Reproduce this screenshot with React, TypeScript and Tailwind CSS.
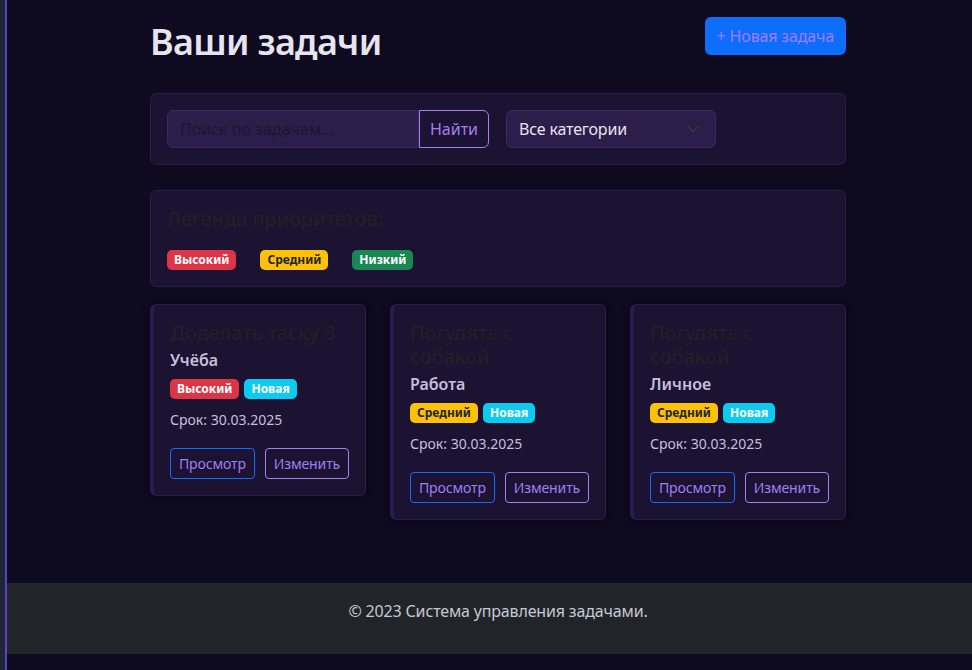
import React from "react";

type Task = {
  id: number;
  title: string;
  category: string;
  priority: "high" | "medium" | "low";
  due: string;
};

const tasks: Task[] = [
  { id: 1, title: "Доделать таску 3", category: "Учёба", priority: "high", due: "30.03.2025" },
  { id: 2, title: "Погулять с собакой", category: "Работа", priority: "medium", due: "30.03.2025" },
  { id: 3, title: "Погулять с собакой", category: "Личное", priority: "medium", due: "30.03.2025" },
];

const PriorityBadge = ({ level }: { level: Task["priority"] }) => {
  if (level === "high")
    return <span className="rounded-[5px] bg-[#dc3545] px-[7px] py-[3px] text-[12px] leading-[14px] font-bold text-white">Высокий</span>;
  if (level === "medium")
    return <span className="rounded-[5px] bg-[#ffc107] px-[7px] py-[3px] text-[12px] leading-[14px] font-bold text-[#212529]">Средний</span>;
  return <span className="rounded-[5px] bg-[#198754] px-[7px] py-[3px] text-[12px] leading-[14px] font-bold text-white">Низкий</span>;
};

const TaskCard = ({ task }: { task: Task }) => (
  <div className="self-start rounded-[6px] border border-l-4 border-[#2a1d47] border-l-[#2c1a50] bg-[#1c1232] p-4 shadow-[0_2px_8px_rgba(0,0,0,0.35)]">
    <h5 className="mb-[3px] text-[20px] leading-[24px] font-medium tracking-[-0.01em] text-[#1f2125]">{task.title}</h5>
    <h6 className="mb-[7px] text-[16px] leading-[24px] font-semibold text-[#c6bfdc]">{task.category}</h6>
    <div className="mb-[10px] flex h-[20px] items-center gap-[5px]">
      <PriorityBadge level={task.priority} />
      <span className="rounded-[5px] bg-[#0dcaf0] px-[7px] py-[3px] text-[12px] leading-[14px] font-bold text-white">Новая</span>
    </div>
    <p className="mb-[18px] text-[14px] leading-[21px] text-[#c6bfdc]">Срок: {task.due}</p>
    <div className="flex justify-between">
      <button className="h-[31px] rounded-[4px] border border-[#0d6efd] px-2 text-[14px] tracking-[-0.01em] text-[#a27df2]">Просмотр</button>
      <button className="h-[31px] rounded-[4px] border border-[#a67ff5] px-2 text-[14px] tracking-[-0.01em] text-[#a27df2]">Изменить</button>
    </div>
  </div>
);

export default function App() {
  return (
    <div className="flex min-h-screen bg-[#0e0a20] font-['Noto_Sans','Open_Sans',sans-serif]">
      <div className="w-[5px] bg-[#1e2633]" />
      <div className="w-[2px] bg-[#5b3fd0]" />
      <div className="flex flex-1 flex-col">
        <main className="ml-[143px] w-[696px] pt-[17px]">
          <div className="mb-[30px] flex items-start justify-between">
            <h1 className="mt-[3px] text-[36px] leading-[43px] font-semibold tracking-[-0.02em] text-[#e6e4ee]">Ваши задачи</h1>
            <button className="h-[38px] rounded-[6px] bg-[#0d6efd] px-[12px] text-[16px] tracking-[-0.01em] text-[#a27df2]">+ Новая задача</button>
          </div>

          <div className="mb-[25px] flex gap-[17px] rounded-[6px] border border-[#2a1d47] bg-[#1c1232] p-4">
            <div className="flex">
              <input
                placeholder="Поиск по задачам..."
                className="h-[38px] w-[252px] rounded-l-[6px] border border-[#3a2960] bg-[#2d1d4b] px-3 text-[16px] text-[#1c1630] outline-none placeholder:text-[#1c1630] placeholder:opacity-100"
              />
              <button className="h-[38px] w-[70px] rounded-r-[6px] border border-[#a67ff5] text-[16px] text-[#a27df2]">Найти</button>
            </div>
            <div className="flex h-[38px] w-[210px] items-center justify-between rounded-[6px] border border-[#3a2960] bg-[#2d1d4b] pr-[16px] pl-3">
              <span className="text-[16px] tracking-[-0.01em] text-[#e6e4ee]">Все категории</span>
              <svg width="12" height="8" viewBox="0 0 12 8" fill="none">
                <path d="M1 1.5l5 5 5-5" stroke="#343a40" strokeWidth="1.6" strokeLinecap="round" strokeLinejoin="round" />
              </svg>
            </div>
          </div>

          <div className="mb-[17px] rounded-[6px] border border-[#2a1d47] bg-[#1c1232] p-4">
            <h5 className="mb-[19px] text-[20px] leading-[24px] font-medium tracking-[-0.01em] text-[#1f2125]">Легенда приоритетов:</h5>
            <div className="flex h-[20px] items-center gap-[24px]">
              <PriorityBadge level="high" />
              <PriorityBadge level="medium" />
              <PriorityBadge level="low" />
            </div>
          </div>

          <div className="grid grid-cols-3 gap-6">
            {tasks.map((task) => (
              <TaskCard task={task} key={task.id} />
            ))}
          </div>
        </main>

        <footer className="mt-[63px] h-[71px] bg-[#212529] pt-4">
          <p className="ml-[143px] w-[696px] text-center text-[16px] leading-[24px] tracking-[-0.01em] text-[#c6c8d4]">
            © 2023 Система управления задачами.
          </p>
        </footer>
      </div>
    </div>
  );
}
